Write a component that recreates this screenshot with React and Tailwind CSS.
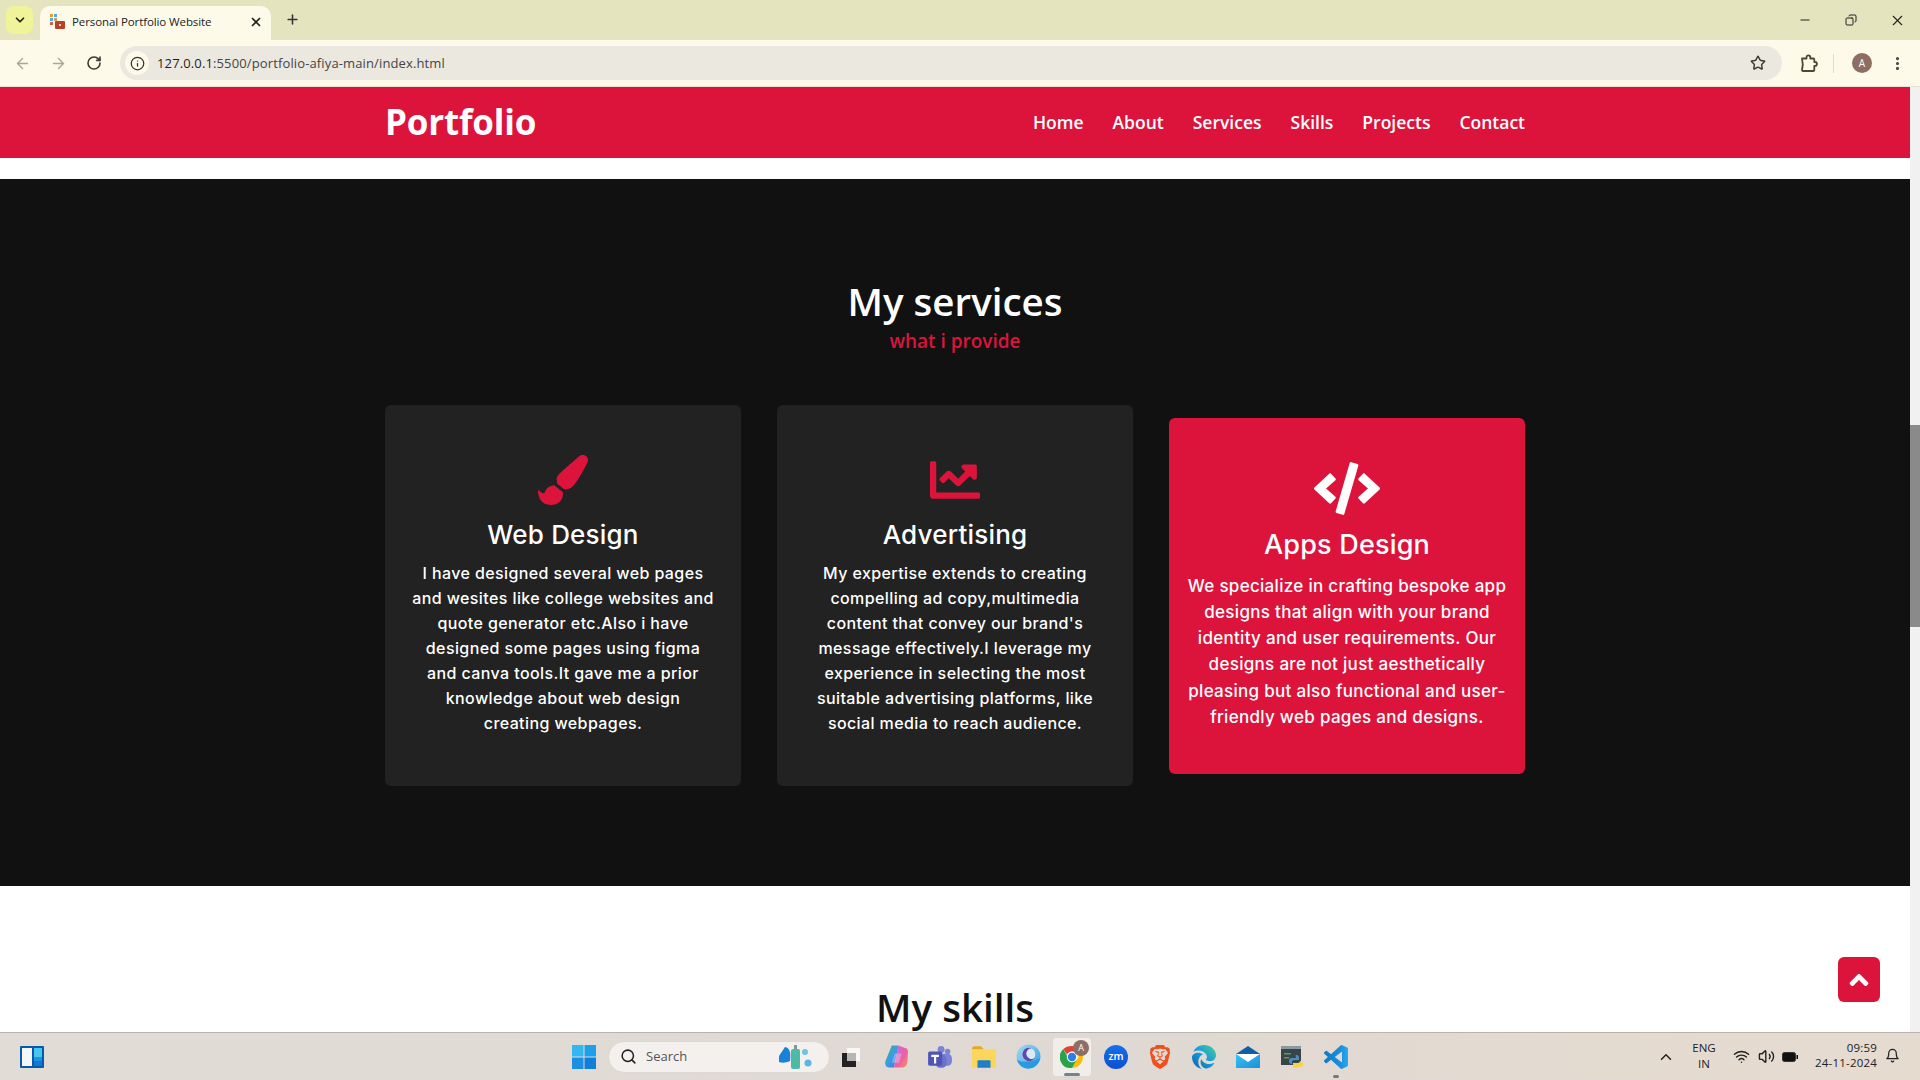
import React from "react";
import { FaPaintBrush, FaChartLine, FaCode, FaAngleUp } from "react-icons/fa";
import { FaEdge } from "react-icons/fa6";
import { SiBrave } from "react-icons/si";
import { LuArrowLeft, LuArrowRight, LuRotateCw, LuInfo, LuStar, LuChevronDown, LuX, LuPlus, LuMinus, LuCopy, LuEllipsisVertical, LuChevronUp, LuWifi, LuVolume2, LuBell, LuSearch } from "react-icons/lu";

const UB = "font-['Open_Sans','Noto_Sans',sans-serif]";
const POP = "font-['Inter','Noto_Sans',sans-serif]";

const cards = [
  { icon: <FaPaintBrush className="text-[50px] text-[#dc143c]" />, title: "Web Design", lines: ["I have designed several web pages", "and wesites like college websites and", "quote generator etc.Also i have", "designed some pages using figma", "and canva tools.It gave me a prior", "knowledge about web design", "creating webpages."] },
  { icon: <FaChartLine className="text-[50px] text-[#dc143c]" />, title: "Advertising", lines: ["My expertise extends to creating", "compelling ad copy,multimedia", "content that convey our brand's", "message effectively.I leverage my", "experience in selecting the most", "suitable advertising platforms, like", "social media to reach audience."] },
];
const active = ["We specialize in crafting bespoke app", "designs that align with your brand", "identity and user requirements. Our", "designs are not just aesthetically", "pleasing but also functional and user-", "friendly web pages and designs."];

function Card({ c }) {
  return (
    <div className="w-[356px] h-[381px] rounded-md bg-[#222222] text-white flex flex-col items-center pt-[50px]">
      <div className="h-[50px] flex items-center">{c.icon}</div>
      <h3 className={`${POP} mt-[12px] text-[26px] leading-[36px] font-medium tracking-[0.2px]`}>{c.title}</h3>
      <div className={`${POP} mt-[8px] text-[16px] leading-[25px] font-[450] text-center tracking-[0.4px]`}>
        {c.lines.map((l) => <div key={l} className="whitespace-nowrap">{l}</div>)}
      </div>
    </div>
  );
}

function Slot({ children, cls = "" }) {
  return <div className={`w-[44px] h-[44px] shrink-0 flex items-center justify-center ${cls}`}>{children}</div>;
}

function Taskbar() {
  return (
    <div className="h-[48px] shrink-0 flex items-center border-t border-[#b9b4ad] bg-[linear-gradient(90deg,#e1dcd6,#e0d9d3_60%,#e6dbcf)] relative">
      <svg width="0" height="0" className="absolute">
        <defs>
          <linearGradient id="edgeGrad" x1="1" y1="0" x2="0" y2="1"><stop offset="0" stopColor="#4fd08a" /><stop offset="0.45" stopColor="#1c9fd8" /><stop offset="1" stopColor="#0f5fb0" /></linearGradient>
          <linearGradient id="vsGrad" x1="0" y1="0" x2="1" y2="0"><stop offset="0" stopColor="#0f78c4" /><stop offset="0.7" stopColor="#1a92dc" /><stop offset="1" stopColor="#2aa8ee" /></linearGradient>
          <linearGradient id="cpL" x1="0" y1="0" x2="1" y2="1"><stop offset="0" stopColor="#38b96f" /><stop offset="0.5" stopColor="#3a9be8" /><stop offset="1" stopColor="#4a6fe0" /></linearGradient>
          <linearGradient id="cpR" x1="0" y1="0" x2="1" y2="1"><stop offset="0" stopColor="#c56ce0" /><stop offset="0.6" stopColor="#ee5fa5" /><stop offset="1" stopColor="#f49a47" /></linearGradient>
          <linearGradient id="arc" x1="0" y1="0" x2="1" y2="1"><stop offset="0" stopColor="#a6dcf5" /><stop offset="1" stopColor="#2a9ae0" /></linearGradient>
          <linearGradient id="mailG" x1="0" y1="0" x2="1" y2="1"><stop offset="0" stopColor="#36c3f2" /><stop offset="1" stopColor="#1a8fdc" /></linearGradient>
        </defs>
      </svg>
      <div className="w-[562px] shrink-0 pl-[20px] flex items-center">
        <svg width="24" height="22" viewBox="0 0 24 22"><rect width="24" height="22" rx="1" fill="#0a58a8" /><rect x="2" y="2" width="10" height="18" fill="#f4f7fa" /><rect x="14" y="2" width="8" height="9" fill="#45c6f2" /><rect x="14" y="11" width="8" height="4" fill="#1b93e4" /><rect x="14" y="15" width="8" height="5" fill="#0f78d4" /></svg>
      </div>
      <Slot>
        <svg width="24" height="24" viewBox="0 0 24 24"><rect width="11.5" height="11.5" fill="#34b6f3" /><rect x="12.5" width="11.5" height="11.5" fill="#1e9fec" /><rect y="12.5" width="11.5" height="11.5" fill="#1a8fe3" /><rect x="12.5" y="12.5" width="11.5" height="11.5" fill="#0f7fd8" /></svg>
      </Slot>
      <div className="ml-[2px] w-[222px] h-[32px] shrink-0 rounded-full bg-[#f3f0ed] border border-[#dcd8d3] flex items-center pl-[11px] pr-[4px]">
        <LuSearch className="text-[17px] text-[#222]" strokeWidth={2.2} />
        <span className="ml-[9px] text-[13px] text-[#555] font-['Open_Sans',sans-serif]">Search</span>
        <svg className="ml-auto" width="46" height="30" viewBox="0 0 46 30"><path d="M0 14 6 5c5 1 6 6 5 14-4 2-8 2-11 1z" fill="#1a80d8" /><rect x="12" y="7" width="9" height="20" rx="2" fill="#4fb9a8" /><rect x="15" y="3" width="3" height="4" fill="#7b9a96" /><circle cx="26" cy="10" r="3" fill="#6fc3e8" /><circle cx="29" cy="21" r="3.5" fill="#58b5e4" /></svg>
      </div>
      <Slot>
        <svg width="24" height="24" viewBox="0 0 24 24"><rect x="7" y="3" width="13" height="13" fill="#f8f7f5" /><rect x="2" y="8" width="14" height="14" fill="#222" /><rect x="7" y="8" width="9" height="8" fill="#b8b5b2" /></svg>
      </Slot>
      <Slot>
        <svg width="25" height="25" viewBox="0 0 24 24"><path d="M7.500 1.500h6.500L9.500 22.500H5C1.500 22.500.5 19 1.500 16z" fill="url(#cpL)" /><path d="M9.500 22.500h7.500c3.500 0 4.500-1.500 5.500-5L23 8c.3-3-1-4-3.500-4.500L14 1.500z" fill="url(#cpR)" /><path d="M10 9h7l-2.500 9H7.500z" fill="#e8e4ff" opacity=".35" /></svg>
      </Slot>
      <Slot>
        <svg width="26" height="26" viewBox="0 0 24 24"><circle cx="19" cy="7" r="2.6" fill="#7b83d8" /><circle cx="13" cy="5" r="3.2" fill="#7b83d8" /><rect x="11" y="9" width="12" height="11" rx="4" fill="#7b83d8" /><rect x="8" y="10" width="10" height="12" rx="4" fill="#6a72cc" /><rect x="1" y="7" width="13" height="13" rx="1.5" fill="#4c55b8" /><path d="M4 10h7v2H8.500v6h-2v-6H4z" fill="#fff" /></svg>
      </Slot>
      <Slot>
        <svg width="26" height="24" viewBox="0 0 24 22"><path d="M1 3a2 2 0 0 1 2-2h6l3 3H1z" fill="#e3a72a" /><path d="M1 4h22v16a1 1 0 0 1-1 1H2a1 1 0 0 1-1-1z" fill="#fbd65a" /><path d="M7 14h10a1 1 0 0 1 1 1v6H6v-6a1 1 0 0 1 1-1z" fill="#1d7fc9" /></svg>
      </Slot>
      <Slot>
        <svg width="25" height="25" viewBox="0 0 24 24"><circle cx="12" cy="12" r="11.500" fill="url(#arc)" /><circle cx="12" cy="10" r="6.500" fill="#dbeaf6" /><path d="M15 4a6.500 6.500 0 1 0 3 9.500 5.200 5.200 0 1 1-3-9.500z" fill="#5a4bb0" /><path d="M1 15c5 3 12 3 22-1-2 6-6 9.500-11 9.500S2 20 1 15z" fill="#2a9ae0" /></svg>
      </Slot>
      <div className="w-[44px] h-[44px] shrink-0 flex items-center justify-center">
        <div className="w-[38px] h-[38px] rounded bg-[#f1eeea] relative flex items-center justify-center">
          <svg width="24" height="24" viewBox="0 0 24 24"><path d="M12 1a11 11 0 0 1 9.530 5.500H12a5.500 5.500 0 0 0-5 3L3.300 4A11 11 0 0 1 12 1z" fill="#dd4437" /><path d="M21.500 6.500A11 11 0 0 1 12 23l4.700-8.200a5.500 5.500 0 0 0 .1-8.300z" fill="#fbbc05" /><path d="M12 23A11 11 0 0 1 3.300 4L7.900 12.500a5.500 5.500 0 0 0 8.800 2.300L12 23z" fill="#2aa24a" /><circle cx="12" cy="12" r="5.200" fill="#fff" /><circle cx="12" cy="12" r="4.200" fill="#2f7de9" /></svg>
          <div className="absolute right-[2px] top-[2px] w-[16px] h-[16px] rounded-full bg-[#8d6e63] text-white text-[9px] flex items-center justify-center font-['Open_Sans',sans-serif]">A</div>
          <div className="absolute bottom-0 left-[11px] w-[16px] h-[3px] rounded bg-[#6f8590]" />
        </div>
      </div>
      <Slot>
        <div className="w-[24px] h-[24px] rounded-full bg-[linear-gradient(180deg,#1670ec,#0d4fcf)] text-white text-[10.500px] font-semibold flex items-center justify-center font-['Open_Sans',sans-serif]">zm</div>
      </Slot>
      <Slot>
        <SiBrave className="text-[24px] text-[#f0501e]" />
      </Slot>
      <Slot>
        <FaEdge className="text-[24px] fill-[url(#edgeGrad)]" />
      </Slot>
      <Slot>
        <svg width="24" height="24" viewBox="0 0 24 24"><path d="M0 9 12 1l12 8v3H0z" fill="#0f5fa8" /><rect y="9" width="24" height="14" fill="url(#mailG)" /><path d="M0 9l12 8 12-8H0z" fill="#fff" /></svg>
      </Slot>
      <Slot>
        <svg width="24" height="24" viewBox="0 0 24 24"><rect x="1" y="1" width="20" height="19" fill="#38454a" /><rect x="1" y="1" width="20" height="3" fill="#8a9aa2" /><rect x="4" y="8" width="7" height="1.500" fill="#5b9a5b" /><rect x="4" y="12" width="5" height="1.500" fill="#5b9a5b" /><path d="M16 10c3 0 3 2 3 3v2h-5c-1 0-2 1-2 2v2c-2 0-3-1-3-3 0-3 2-3 3-3h4c0-2-1-3 0-3z" fill="#4c8cbf" /><path d="M16 23c-2 0-3-1-3-2v-3h5c1 0 2-1 2-2 2 0 3 1 3 3 0 3-2 3-3 3h-1z" fill="#f7d44b" /></svg>
      </Slot>
      <div className="w-[44px] h-[44px] shrink-0 relative flex items-center justify-center">
        <svg width="24" height="24" viewBox="0 0 24 24"><path fill="url(#vsGrad)" d="M23.150 2.587 18.210.21a1.494 1.494 0 0 0-1.705.29l-9.460 8.630-4.120-3.128a.999.999 0 0 0-1.276.057L.327 7.261A1 1 0 0 0 .326 8.740L3.899 12 .326 15.260a1 1 0 0 0 .001 1.479L1.650 17.940a.999.999 0 0 0 1.276.057l4.120-3.128 9.460 8.630a1.492 1.492 0 0 0 1.704.290l4.942-2.377A1.500 1.500 0 0 0 24 20.060V3.939a1.500 1.500 0 0 0-.850-1.352zm-5.146 14.861L10.826 12l7.178-5.448v10.896z" /></svg>
        <div className="absolute bottom-[1px] left-[19px] w-[6px] h-[3px] rounded bg-[#777]" />
      </div>
      <div className="absolute left-[1657px] top-[15px] text-[#222]"><LuChevronUp className="text-[18px]" /></div>
      <div className="absolute left-[1692px] top-[7px] w-[24px] text-center text-[11.500px] leading-[16px] text-[#222] font-['Open_Sans',sans-serif]">ENG<br />IN</div>
      <div className="absolute left-[1733px] top-[15px] flex items-center gap-[8px] text-[#222]">
        <LuWifi className="text-[17px]" />
        <LuVolume2 className="text-[17px]" />
        <svg width="16" height="10" viewBox="0 0 16 10" className="-ml-[1px]"><rect x=".5" y=".5" width="13" height="9" rx="2" fill="#111" stroke="#333" /><rect x="14.500" y="3" width="1.500" height="4" fill="#111" /></svg>
      </div>
      <div className="absolute right-[43px] top-[7px] text-right text-[11.500px] leading-[15px] text-[#222] tracking-[0.2px] font-['Open_Sans',sans-serif]">09:59<br />24-11-2024</div>
      <div className="absolute left-[1885px] top-[15px] text-[#222]"><LuBell className="text-[15px]" /></div>
    </div>
  );
}

export default function App() {
  return (
    <div className="w-[1920px] h-[1080px] overflow-hidden flex flex-col bg-white">
      <div className="h-[40px] shrink-0 bg-[#e4e5bf] flex items-end pl-[6px] relative font-['Open_Sans',sans-serif]">
        <div className="self-start mt-[6px] w-[27px] h-[28px] rounded-lg bg-[#f0f39a] flex items-center justify-center text-[#222]"><LuChevronDown className="text-[14px]" strokeWidth={3} /></div>
        <div className="ml-[7px] w-[231px] h-[34px] rounded-t-[10px] bg-[#fdfaea] flex items-center pl-[9px] pr-[8px] pb-[3px]">
          <svg width="17" height="17" viewBox="0 0 17 17"><rect x="1" y="1" width="3" height="3" fill="#e0a030" /><rect x="5" y="1" width="3" height="3" fill="#58a8d8" /><rect x="1" y="5" width="3" height="3" fill="#58a8d8" /><rect x="5" y="5" width="3" height="3" fill="#c8a070" /><rect x="1" y="9" width="3" height="3" fill="#d06050" /><rect x="6" y="8" width="10" height="8" rx="1" fill="#b8412e" /><rect x="10" y="11" width="2" height="2" fill="#f4d090" /></svg>
          <span className="ml-[6px] text-[11.500px] tracking-[-0.1px] text-[#222] whitespace-nowrap">Personal Portfolio Website</span>
          <LuX className="ml-auto text-[14px] text-[#222]" strokeWidth={3} />
        </div>
        <div className="self-center ml-[14px] mt-[-1px] text-[#333]"><LuPlus className="text-[15px]" strokeWidth={2.5} /></div>
        <div className="absolute right-0 top-0 h-[40px] flex items-center text-[#222]">
          <div className="w-[46px] flex justify-center"><LuMinus className="text-[14px]" /></div>
          <div className="w-[46px] flex justify-center"><LuCopy className="text-[12px] -scale-x-100" /></div>
          <div className="w-[46px] flex justify-center"><LuX className="text-[17px]" strokeWidth={1.5} /></div>
        </div>
      </div>
      <div className="h-[47px] shrink-0 bg-[#fdfaea] border-b border-[#e6e3d2] flex items-center font-['Open_Sans',sans-serif]">
        <div className="w-[120px] pl-[14px] flex items-center gap-[19px] shrink-0">
          <LuArrowLeft className="text-[17px] text-[#a9a89d]" />
          <LuArrowRight className="text-[17px] text-[#a9a89d]" />
          <LuRotateCw className="text-[16px] text-[#3c3c34]" strokeWidth={2.4} />
        </div>
        <div className="w-[1662px] h-[34px] rounded-full bg-[#ebe8e0] flex items-center pl-[5px] pr-[16px] shrink-0">
          <div className="w-[24px] h-[24px] rounded-full bg-[#fdfaea] flex items-center justify-center"><LuInfo className="text-[15px] text-[#333]" /></div>
          <span className="ml-[8px] mt-[1px] text-[13px] text-[#444] tracking-[0.13px]"><span className="text-[#1f1f1f]">127.0.0.1</span>:5500/portfolio-afiya-main/index.html</span>
          <LuStar className="ml-auto text-[16px] text-[#3c3c34]" strokeWidth={2.2} />
        </div>
        <svg className="ml-[18px]" width="18" height="19" viewBox="0 0 18 19" fill="none" stroke="#4a4a30" strokeWidth="1.800" strokeLinejoin="round"><path d="M2 4.500h4.500V3.200a1.900 1.900 0 0 1 3.800 0v1.300h3a1 1 0 0 1 1 1V8h.7a1.900 1.900 0 0 1 0 3.800h-.7V16a1 1 0 0 1-1 1H3a1 1 0 0 1-1-1l.8-5.500z" /></svg>
        <div className="ml-[15px] w-[1px] h-[19px] bg-[#dfe39a]" />
        <div className="ml-[18px] w-[20px] h-[20px] rounded-full bg-[#8d6e63] text-white text-[10px] flex items-center justify-center">A</div>
        <LuEllipsisVertical className="ml-[17px] text-[17px] text-[#444]" strokeWidth={2.5} />
      </div>

      <div className="flex-1 min-h-0 flex relative overflow-hidden">
        <div className="flex-1 min-w-0">
          <div className="h-[71px] bg-[#dc143c] flex justify-center">
            <div className={`w-[1140px] flex items-center justify-between text-white ${UB}`}>
              <div className="text-[35px] font-bold tracking-[-0.2px]">Portfolio</div>
              <div className="flex gap-[29px] text-[17.500px] font-semibold">
                <span>Home</span><span>About</span><span>Services</span><span>Skills</span><span>Projects</span><span>Contact</span>
              </div>
            </div>
          </div>
          <div className="h-[21px]" />
          <div className="h-[707px] bg-[#111111] flex flex-col items-center pt-[98px]">
            <h2 className={`${UB} text-[38.500px] leading-[48px] font-semibold text-white`}>My services</h2>
            <div className={`${UB} text-[19px] leading-[26px] font-semibold text-[#dc143c] mt-[3px]`}>what i provide</div>
            <div className="mt-[51px] w-[1140px] flex justify-between items-center">
              {cards.map((c) => <Card key={c.title} c={c} />)}
              <div className="w-[356px] h-[356px] rounded-md bg-[#dc143c] text-white flex flex-col items-center pt-[44px]">
                <FaCode className="w-[66px] h-[53px]" />
                <h3 className={`${POP} mt-[11px] text-[27px] leading-[38px] font-medium tracking-[0.2px]`}>Apps Design</h3>
                <div className={`${POP} mt-[9px] text-[17px] leading-[26.25px] font-[450] text-center tracking-[0.3px]`}>
                  {active.map((l) => <div key={l} className="whitespace-nowrap">{l}</div>)}
                </div>
              </div>
            </div>
          </div>
          <div className="pt-[97px] flex justify-center">
            <h2 className={`${UB} text-[38.500px] leading-[48px] font-semibold text-[#111]`}>My skills</h2>
          </div>
        </div>
        <div className="w-[10px] shrink-0 bg-[#f1f1f1] flex flex-col pt-[338px]">
          <div className="h-[202px] bg-[#8a8a8a]" />
        </div>
        <div className="absolute left-[1838px] top-[870px] w-[42px] h-[45px] rounded-md bg-[#dc143c] flex items-center justify-center text-white"><FaAngleUp className="text-[30px]" /></div>
      </div>
      <Taskbar />
    </div>
  );
}
